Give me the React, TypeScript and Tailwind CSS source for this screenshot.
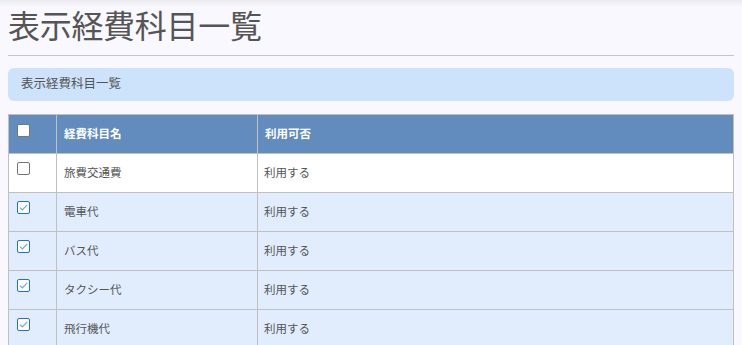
import React from "react";

const rows = [
  { name: "旅費交通費", usage: "利用する", checked: false },
  { name: "電車代", usage: "利用する", checked: true },
  { name: "バス代", usage: "利用する", checked: true },
  { name: "タクシー代", usage: "利用する", checked: true },
  { name: "飛行機代", usage: "利用する", checked: true },
];

function Box({ checked }: { checked: boolean }) {
  if (checked) {
    return (
      <span className="block w-[13px] h-[13px] rounded-[2px] border border-[#1f6fe0] bg-white relative">
        <svg viewBox="0 0 13 13" className="absolute left-[-1px] top-[-1px] w-[13px] h-[13px]">
          <path d="M3 6.8 L5.4 9 L10.2 3.8" fill="none" stroke="#6ea8ee" strokeWidth="1.2" />
        </svg>
      </span>
    );
  }
  return <span className="block w-[13px] h-[13px] rounded-[2px] border border-[#767676] bg-white" />;
}

export default function App() {
  return (
    <div
      className="min-h-screen bg-[linear-gradient(to_bottom,#e9e9ee,#f8f8fe_7px)] px-2 pt-[4px] text-[#555]"
      style={{ fontFamily: '"Noto Sans CJK JP", "Noto Sans", sans-serif' }}
    >
      <h1 className="text-[32px] leading-[40px] font-normal text-[#555] tracking-[-0.3px]">表示経費科目一覧</h1>
      <div className="mt-[11px] border-t border-[#c4c4c4]" />
      <div className="mt-[12px] h-[33px] rounded-[6px] bg-[#cde2fb] pl-[13px] flex items-center text-[12.5px] leading-none pb-[3px]">
        表示経費科目一覧
      </div>
      <table className="mt-[13px] w-full border-separate border-spacing-0 text-[11.5px] border-l border-t border-[#c0c0c0]">
        <thead>
          <tr className="bg-[#628bbe] text-white font-bold">
            <th className="w-[48px] h-[39px] border-r border-b border-[#c0c0c0] pl-[8px] align-top pt-[9px] text-left">
              <Box checked={false} />
            </th>
            <th className="w-[201px] border-r border-b border-[#c0c0c0] pl-[7px] text-left font-bold">経費科目名</th>
            <th className="border-r border-b border-[#c0c0c0] pl-[7px] text-left font-bold">利用可否</th>
          </tr>
        </thead>
        <tbody>
          {rows.map((r, i) => (
            <tr key={i} className={r.checked ? "bg-[#e1edfd]" : "bg-white"}>
              <td className="h-[39px] border-r border-b border-[#c0c0c0] pl-[8px] align-top pt-[8px]">
                <Box checked={r.checked} />
              </td>
              <td className="border-r border-b border-[#c0c0c0] pl-[7px] text-[#555]">{r.name}</td>
              <td className="border-r border-b border-[#c0c0c0] pl-[6px] text-[#555]">{r.usage}</td>
            </tr>
          ))}
        </tbody>
      </table>
    </div>
  );
}
